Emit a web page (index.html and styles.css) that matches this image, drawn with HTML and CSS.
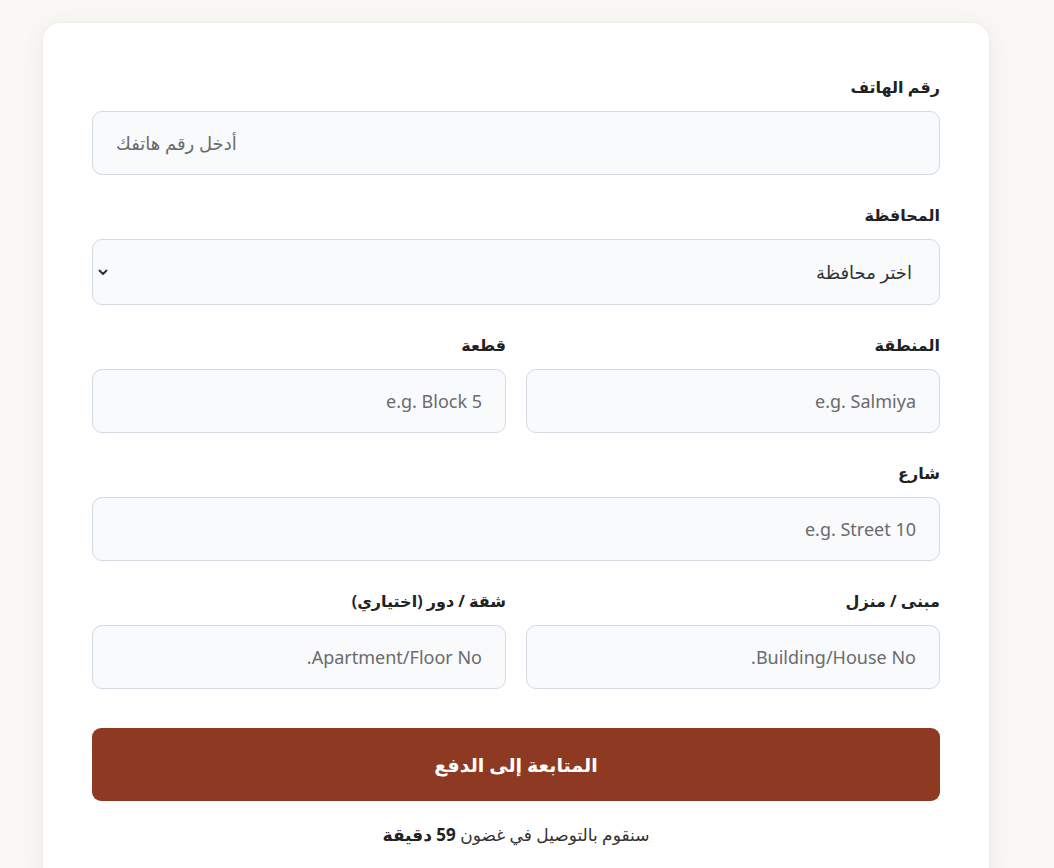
FILE: index.html
```html
<!DOCTYPE html>
<html lang="ar" dir="rtl">
<head>
    <meta charset="UTF-8">
    <title>بيانات التوصيل</title>
    <meta name="viewport" content="width=device-width, initial-scale=1.0">
    <link rel="stylesheet" href="styles.css">
</head>
<body>
    <form id="address-form" class="card">
        <div class="field">
            <label for="phone">رقم الهاتف</label>
            <input type="text" id="phone" name="phone" dir="ltr" placeholder="أدخل رقم هاتفك">
        </div>

        <div class="field">
            <label for="governorate">المحافظة</label>
            <div class="select-wrap">
                <select id="governorate" name="governorate">
                    <option value="">اختر محافظة</option>
                </select>
                <svg class="chevron" width="12" height="12" viewBox="0 0 12 12"><path d="M2.5 4.5 6 8l3.5-3.5" fill="none" stroke="#2b313b" stroke-width="1.9" stroke-linecap="round" stroke-linejoin="round"/></svg>
            </div>
        </div>

        <div class="row">
            <div class="field">
                <label for="area">المنطقة</label>
                <input type="text" id="area" name="area" placeholder="e.g. Salmiya">
            </div>
            <div class="field">
                <label for="block">قطعة</label>
                <input type="text" id="block" name="block" placeholder="e.g. Block 5">
            </div>
        </div>

        <div class="field">
            <label for="street">شارع</label>
            <input type="text" id="street" name="street" placeholder="e.g. Street 10">
        </div>

        <div class="row">
            <div class="field">
                <label for="building">مبنى / منزل</label>
                <input type="text" id="building" name="building" placeholder="Building/House No.">
            </div>
            <div class="field">
                <label for="floor">شقة / دور (اختياري)</label>
                <input type="text" id="floor" name="floor" placeholder="Apartment/Floor No.">
            </div>
        </div>

        <button type="submit" class="submit-btn">المتابعة إلى الدفع</button>

        <p class="eta">سنقوم بالتوصيل في غضون <b>59 دقيقة</b></p>
    </form>
</body>
</html>
```

FILE: styles.css
```css
body {
    margin: 0;
    font-family: "Noto Sans", "DejaVu Sans", sans-serif;
    background-color: #f9f8f4;
    color: #1f2328;
}

.card {
    box-sizing: border-box;
    width: 948px;
    margin: 22px 64px 0 42px;
    padding: 50px 49px 40px;
    background: #fff;
    border: 1px solid #f0ede8;
    border-radius: 18px;
    box-shadow: 0 4px 24px rgba(60, 40, 20, 0.06);
}

.field {
    margin-bottom: 26px;
}

label {
    display: block;
    margin-bottom: 10px;
    font-size: 16px;
    font-weight: 700;
    line-height: 28px;
    color: #222;
}

input[type="text"],
select {
    box-sizing: border-box;
    width: 100%;
    height: 64px;
    padding: 0 23px;
    border: 1px solid #d3dae3;
    border-radius: 10px;
    background: #f8fafc;
    font-family: inherit;
    font-size: 18px;
    color: #333;
    outline: none;
}

input::placeholder {
    color: #6b6b6b;
}

.select-wrap {
    position: relative;
}

select {
    height: 66px;
    padding-right: 27px;
    appearance: none;
    -webkit-appearance: none;
    color: #333;
}

.chevron {
    position: absolute;
    left: 5px;
    top: 27px;
    pointer-events: none;
}

.row {
    display: flex;
    gap: 20px;
}

.row .field {
    flex: 1;
}

.submit-btn {
    display: block;
    width: 100%;
    height: 73px;
    margin-top: 13px;
    border: none;
    border-radius: 9px;
    background-color: #8e3a23;
    color: #fff;
    font-family: inherit;
    font-size: 19px;
    font-weight: 700;
    cursor: pointer;
}

.eta {
    margin: 22px 0 0;
    text-align: center;
    font-size: 17px;
    color: #333;
}

.eta b {
    color: #222;
}
```
